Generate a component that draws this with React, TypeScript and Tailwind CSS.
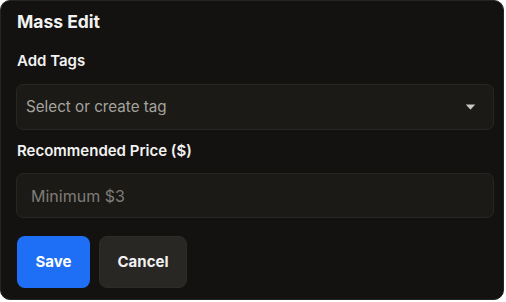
import React from "react";

export default function App() {
  return (
    <div className="w-[506px] h-[302px] bg-white" style={{ fontFamily: "Inter, 'Noto Sans', sans-serif" }}>
      <div className="w-[504px] h-[300px] rounded-[10px] bg-[#131210] border border-[#262521] pl-[15px] pr-[9px] pt-[9px] flex flex-col">
        <div className="text-[17.5px] leading-[24px] font-bold text-[#f2f2f2] pl-[1px]">Mass Edit</div>
        <div className="mt-[17px] text-[15px] leading-[20px] font-semibold text-[#f2f2f2] pl-[1px]">Add Tags</div>
        <div className="mt-[13px] h-[46px] w-[478px] rounded-[7px] bg-[#1b1a17] border border-[#272622] flex items-center justify-between pl-[9px] pr-[17px]">
          <span className="text-[15.2px] text-[#a5a39e]">Select or create tag</span>
          <svg width="11" height="6" viewBox="0 0 11 6">
            <path d="M0.8 0.6 H10.2 L5.9 5.2 Q5.5 5.6 5.1 5.2 Z" fill="#c9c8c5" />
          </svg>
        </div>
        <div className="mt-[11px] text-[15px] leading-[20px] font-semibold text-[#f2f2f2] pl-[1px]">Recommended Price ($)</div>
        <div className="mt-[12px] h-[45px] w-[478px] rounded-[7px] bg-[#1b1a17] border border-[#272622] flex items-center pl-[14px]">
          <span className="text-[16px] text-[#7f7d78]">Minimum $3</span>
        </div>
        <div className="mt-[18px] flex gap-[9px] pl-[1px]">
          <button className="h-[52px] w-[73px] rounded-[8px] bg-[#1f6ff6] text-white text-[15px] font-bold flex items-center justify-center">
            Save
          </button>
          <button className="h-[52px] w-[88px] rounded-[8px] bg-[#292723] border border-[#2e2c28] text-[#f2f2f2] text-[15px] font-bold flex items-center justify-center">
            Cancel
          </button>
        </div>
      </div>
    </div>
  );
}
